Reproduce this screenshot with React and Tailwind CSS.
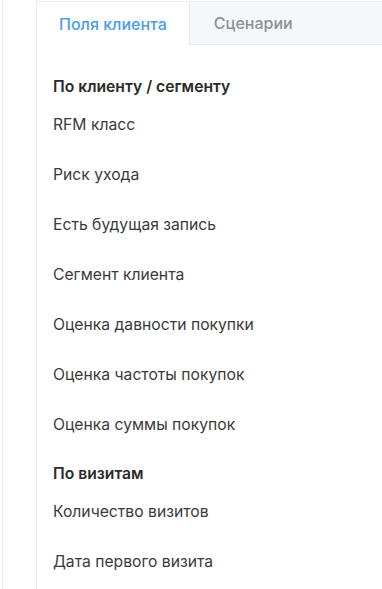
import React from 'react';

const groups = [
  {
    title: 'По клиенту / сегменту',
    items: [
      'RFM класс',
      'Риск ухода',
      'Есть будущая запись',
      'Сегмент клиента',
      'Оценка давности покупки',
      'Оценка частоты покупок',
      'Оценка суммы покупок',
    ],
  },
  {
    title: 'По визитам',
    items: ['Количество визитов', 'Дата первого визита'],
  },
];

const App = () => {
  return (
    <div
      className="h-[589px] w-[382px] overflow-hidden bg-white flex"
      style={{ fontFamily: 'Inter, "Noto Sans", sans-serif' }}
    >
      {/* Left gutter */}
      <div className="w-[36px] shrink-0 pl-[2px]">
        <div className="h-full border-l border-[#ececec]"></div>
      </div>

      {/* Panel */}
      <div className="flex-1 flex flex-col border-l border-t border-[#ededed] mt-[1px] min-w-0">
        {/* Tabs */}
        <div className="flex h-[43px] shrink-0">
          <div className="h-full px-[22px] flex items-center bg-white">
            <span className="text-[16px] font-medium text-[#4a9de6]">Поля клиента</span>
          </div>
          <div className="flex-1 h-full px-[24px] flex items-center bg-[#f6f7fa] border-b border-l border-[#e8e9ee]">
            <span className="text-[16px] font-medium text-[#8d8f94]">Сценарии</span>
          </div>
        </div>

        {/* Fields list */}
        <div className="flex flex-col pl-[16px] pt-[29px]">
          {groups.map((group, gi) => (
            <div key={group.title} className={gi > 0 ? 'mt-[11px]' : ''}>
              <div className="h-[26px] flex items-center text-[15.7px] font-semibold text-[#2a2a2a]">
                {group.title}
              </div>
              {group.items.map((item) => (
                <div key={item} className="h-[50px] flex items-center text-[15.7px] text-[#3a3a3a]">
                  {item}
                </div>
              ))}
            </div>
          ))}
        </div>
      </div>
    </div>
  );
};

export default App;
